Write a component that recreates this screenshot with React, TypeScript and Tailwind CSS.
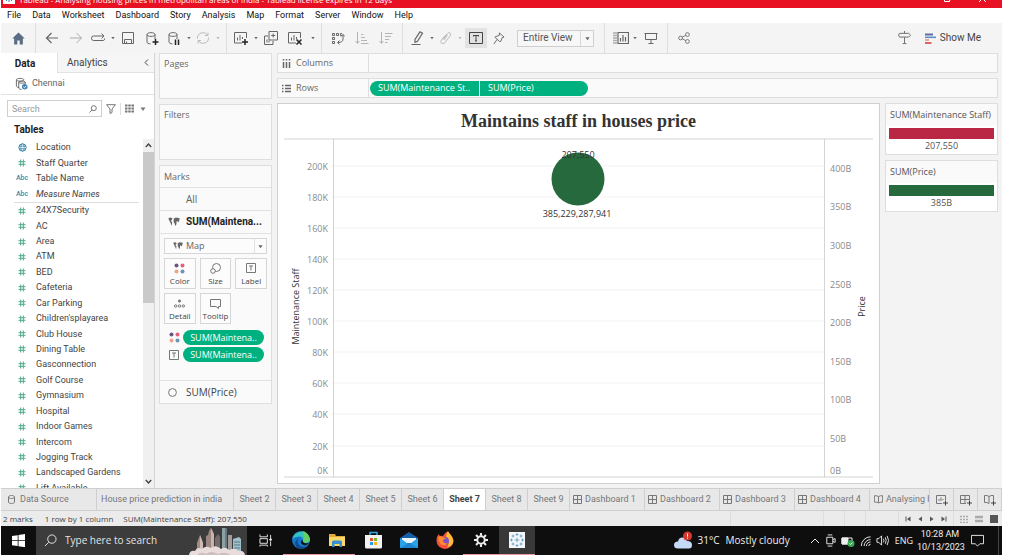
import React from "react";

type Kids = { children?: React.ReactNode };

function Icon({ size = 14, box = "0 0 14 14", className = "", children }: Kids & { size?: number; box?: string; className?: string }) {
  return (
    <svg width={size} height={size} viewBox={box} fill="none" stroke="currentColor" strokeWidth="1" className={`shrink-0 ${className}`} aria-hidden="true">
      {children}
    </svg>
  );
}

function Caret({ size = 6 }: { size?: number }) {
  return (
    <Icon size={size} box="0 0 6 6">
      <path d="M0.5 1.5h5L3 5z" fill="currentColor" stroke="none" />
    </Icon>
  );
}

function Tool({ label, className = "w-5", children }: Kids & { label: string; className?: string }) {
  return (
    <button type="button" aria-label={label} className={`flex h-5 shrink-0 items-center justify-center ${className}`}>
      {children}
    </button>
  );
}

function Sep({ className = "" }: { className?: string }) {
  return <span className={`w-px shrink-0 self-stretch bg-[#dedede] ${className}`} />;
}

const menus = ["File", "Data", "Worksheet", "Dashboard", "Story", "Analysis", "Map", "Format", "Server", "Window", "Help"];

function TitleBar() {
  return (
    <header className="flex h-2 shrink-0 items-center overflow-hidden bg-[#e81123] text-white">
      <div className="flex h-2 flex-1 items-end gap-1 pl-0.5">
        <Icon size={12} box="0 0 12 12" className="-translate-y-1">
          <rect width="12" height="12" fill="#fff" stroke="none" />
          <path d="M6 2v8M2 6h8M3 3l6 6M9 3l-6 6" stroke="#3f83b5" />
        </Icon>
        <span className="-translate-y-0.5 text-[8px] leading-[12px] whitespace-nowrap">
          Tableau - Analysing housing prices in metropolitan areas of india - Tableau license expires in 12 days
        </span>
      </div>
      <div className="flex h-2 items-start gap-7 pr-4">
        <Icon size={7} box="0 5 7 7">
          <path d="M.5 3v3.500h5V3M5.500 5h1V2" />
        </Icon>
        <Icon size={7} box="0 5 7 7">
          <path d="M0 0l7 7M7 0L0 7" />
        </Icon>
      </div>
    </header>
  );
}

function MenuBar() {
  return (
    <nav className="flex h-[15px] shrink-0 items-center gap-[11px] bg-white pl-1.5 font-[Roboto,sans-serif] text-[9px] leading-none text-[#111]">
      {menus.map((m) => (
        <button type="button" key={m}>{m}</button>
      ))}
    </nav>
  );
}

function Cylinder({ children }: Kids) {
  return (
    <Icon size={15} box="0 0 15 15">
      <path d="M2 3.500c0-2.500 8-2.500 8 0s-8 2.500-8 0v7.500c0 1 1.500 1.800 3.500 1.900M10 3.500V8" />
      {children}
    </Icon>
  );
}

function Toolbar() {
  return (
    <div role="toolbar" aria-label="Toolbar" className="flex h-[30px] shrink-0 items-center bg-[#f4f4f4] text-[#666]">
      <Tool label="Start page" className="w-[34px]">
        <Icon size={13}>
          <path d="M7 .5L.3 7h2v6.500h3.400V9.200h2.600v4.300h3.400V7h2z" fill="#5b6d83" stroke="none" />
        </Icon>
      </Tool>
      <Sep />
      <div className="flex items-center pl-1">
        <Tool label="Undo" className="w-6">
          <Icon><path d="M13 7H1.500M6.500 2l-5 5 5 5" strokeWidth="1.200" /></Icon>
        </Tool>
        <Tool label="Redo" className="w-6 text-[#aaa]">
          <Icon><path d="M1 7h11.500M7.500 2l5 5-5 5" /></Icon>
        </Tool>
        <Tool label="Replay">
          <Icon><path d="M10 9.500H2.500Q.5 9.500.5 7.200T2.500 5H13M10.500 2.500L13 5l-2.500 2.500M10 9.500h2.500q1 0 1-2" /></Icon>
        </Tool>
        <Tool label="Replay options" className="w-2.5"><Caret size={4} /></Tool>
        <Tool label="Save">
          <Icon><path d="M1.500 1.500h11v11h-11zM3.500 12.500v-4h7v4M5.500 10.500v2" /></Icon>
        </Tool>
        <Tool label="New data source" className="w-7">
          <Cylinder><path d="M10.500 8v6M7.500 11h6" stroke="#222" strokeWidth="1.500" /></Cylinder>
        </Tool>
        <Tool label="Pause auto updates" className="w-4">
          <Cylinder><path d="M8.500 8.500v5.500M11.500 8.500v5.500" stroke="#222" strokeWidth="1.500" /></Cylinder>
        </Tool>
        <Tool label="Pause options" className="w-3.5"><Caret size={4} /></Tool>
        <Tool label="Run update" className="w-3.5 text-[#bbb]">
          <Icon><path d="M1.500 7.500A5.500 5.500 0 0 1 11.500 4M12.500 6.500A5.500 5.500 0 0 1 2.500 10M12 1.500V4.500H9M2 12.500V9.500H5" /></Icon>
        </Tool>
        <Tool label="Update options" className="w-4 text-[#bbb]"><Caret size={4} /></Tool>
      </div>
      <Sep />
      <div className="flex items-center pl-1.5">
        <Tool label="New worksheet" className="w-4">
          <Icon><path d="M8 12H.5V1.500h12V7M3.500 9.500V6.500M6 9.500V4M8.500 8V6" /><path d="M11 8v6M8 11h6" stroke="#222" strokeWidth="1.500" /></Icon>
        </Tool>
        <Tool label="Worksheet options" className="w-3.5"><Caret size={4} /></Tool>
        <Tool label="Duplicate" className="w-4">
          <Icon><path d="M5 .5h8.500V9H5zM4 5H.5v8.500H9V10M9.200 2.500v4M7.200 4.500h4M3 11.500v-3M5 11.500v-2" /></Icon>
        </Tool>
        <Tool label="Clear sheet" className="w-8">
          <Icon><path d="M8 12H.5V1.500h12V7M3.500 9.500V6.500M6 9.500V4M8.500 8V6" /><path d="M8.500 8.500l5 5M13.500 8.500l-5 5" stroke="#222" strokeWidth="1.500" /></Icon>
        </Tool>
        <Tool label="Clear options" className="mr-1 w-1"><Caret size={4} /></Tool>
      </div>
      <Sep className="ml-0.5" />
      <div className="flex items-center pl-1">
        <Tool label="Swap rows and columns" className="w-6">
          <Icon><path d="M1.500 2.500h2v2h-2zM5.500 2.500h2v2h-2zM11 2.500H9.500v2H11M1.500 6.500h2v2h-2zM1.500 10.500h2v2h-2zM12 3.500v4.500q0 3.500-5 3.500M8.500 9.500l-2 2 2 2M10 5.500l2-2 2 2" /></Icon>
        </Tool>
        <Tool label="Sort ascending" className="w-6 text-[#b5b5b5]">
          <Icon><path d="M2.500 1v11M.5 10l2 2.500 2-2.500M6 3.500h2.500M6 6.500h4M6 9.500h6M6 12.500h7.500" /></Icon>
        </Tool>
        <Tool label="Sort descending" className="w-6 text-[#b5b5b5]">
          <Icon><path d="M2.500 1v11M.5 10l2 2.500 2-2.500M6 2.500h7.500M6 5.500h6M6 8.500h4M6 11.500h2.500" /></Icon>
        </Tool>
      </div>
      <Sep className="ml-1" />
      <div className="flex items-center pl-1.5">
        <Tool label="Highlight" className="w-[18px]">
          <Icon><path d="M9 .8l2.500 1.500-5 8-2.500 1 0-2.800zM.5 13.500h9" strokeWidth="1.200" /></Icon>
        </Tool>
        <Tool label="Highlight options" className="w-2.5"><Caret size={4} /></Tool>
        <Tool label="Group" className="w-[18px] text-[#bbb]">
          <Icon><path d="M4 8.500l4.500-6q1-1.500 2.500-.5t0 3L5.500 12q-1.500 1.500-3 .2t-.2-3L7 3.500M5 9l3.500-5" /></Icon>
        </Tool>
        <Tool label="Group options" className="w-2.5 text-[#bbb]"><Caret size={4} /></Tool>
        <Tool label="Show mark labels" className="w-[22px] bg-[#e3e3e3] text-[#444]">
          <Icon><path d="M.5 1.500h13v11H.5zM4.500 4.500h5M7 4.500V10M4.500 4v1.500M9.500 4v1.500M6 10h2" /></Icon>
        </Tool>
        <Tool label="Fix axes" className="w-[22px]">
          <Icon size={13}><path d="M8 1l5 4.500-2 .5-1.500 4-1 .5L3 5.500l1-.5 4-1.500zM5.500 8L2 13" /></Icon>
        </Tool>
      </div>
      <div className="relative ml-2 flex h-[17px] w-[77px] shrink-0 items-center border border-[#cfcfcf] bg-[#f7f7f7]">
        <select aria-label="Fit" className="h-full w-full appearance-none pl-[5px] font-[Roboto,sans-serif] text-[10px] leading-[14px] text-[#555]">
          <option>Entire View</option>
        </select>
        <span className="pointer-events-none absolute inset-y-0 right-0 flex w-[13px] items-center justify-center border-l border-[#d8d8d8]"><Caret size={5} /></span>
      </div>
      <Sep className="ml-2.5" />
      <div className="flex items-center pl-1.5">
        <Tool label="Show cards" className="w-5">
          <Icon size={16} box="0 0 16 14"><path d="M.5 2h3M.5 4.500h3M.5 7h3M.5 9.500h3M.5 12h3" strokeDasharray="1 1" strokeWidth="1.500" /><path d="M5 1.500h10.500v11H5zM7.500 10.500V7M10 10.500V4M12.500 10.500V6" strokeWidth="1.200" /></Icon>
        </Tool>
        <Tool label="Card options" className="w-2"><Caret size={4} /></Tool>
        <Tool label="Presentation mode" className="w-6">
          <Icon><path d="M.5 2.500h13M1.500 2.500v6h11v-6M7 8.500V12M4.500 12.500h5" /></Icon>
        </Tool>
      </div>
      <Sep className="ml-1" />
      <Tool label="Share" className="ml-1.5 w-5">
        <Icon size={12}><circle cx="3" cy="7" r="2.200" /><circle cx="11" cy="3" r="2.200" /><circle cx="11" cy="11" r="2.200" /><path d="M5 6l4-2M5 8l4 2" /></Icon>
      </Tool>
      <div className="ml-auto flex items-center gap-3 pr-[21px]">
        <Tool label="Guide" className="w-4">
          <Icon size={14} box="0 0 15 15"><path d="M7 0v2.500M2 2.500h9.500l2 2-2 2H2Q.8 6.500.8 4.500T2 2.500M7 6.600V13M5 13.500h4" /></Icon>
        </Tool>
        <button type="button" className="flex items-center gap-1 font-[Roboto,sans-serif] text-[10px] leading-none text-[#444]">
          <Icon size={11} box="0 0 11 11">
            <path d="M0 1.500h8" stroke="#5f6da0" strokeWidth="2" /><path d="M0 4.300h11" stroke="#5b8fc9" strokeWidth="1.600" />
            <path d="M0 7h4" stroke="#eb9a82" strokeWidth="1.600" /><path d="M0 10h6.500" stroke="#e0564f" strokeWidth="1.800" />
          </Icon>
          Show Me
        </button>
      </div>
    </div>
  );
}

const measures = ["24X7Security", "AC", "Area", "ATM", "BED", "Cafeteria", "Car Parking", "Children'splayarea", "Club House", "Dining Table", "Gasconnection", "Golf Course", "Gymnasium", "Hospital", "Indoor Games", "Intercom", "Jogging Track", "Landscaped Gardens", "Lift Available"];

function Hash() {
  return (
    <Icon size={8} box="0 0 8 8" className="text-[#4fa88a]">
      <path d="M2.700.5v7M5.300.5v7M.5 2.700h7M.5 5.300h7" />
    </Icon>
  );
}

function Field({ kind, name }: { kind: "geo" | "num" | "abc"; name: string }) {
  return (
    <li className="flex items-center gap-1.5">
      <span className="flex w-4 justify-center text-[#3a86ab]">
        {kind === "num" && <Hash />}
        {kind === "abc" && <span className="text-[7px] leading-none font-medium">Abc</span>}
        {kind === "geo" && <Icon size={9} box="0 0 9 9"><circle cx="4.500" cy="4.500" r="3.700" /><ellipse cx="4.500" cy="4.500" rx="1.700" ry="3.700" strokeWidth=".8" /><path d="M1 3.200h7M1 5.800h7" strokeWidth=".8" /></Icon>}
      </span>
      <span className={name === "Measure Names" ? "italic" : ""}>{name}</span>
    </li>
  );
}

function DataPane() {
  return (
    <aside className="flex w-[154px] shrink-0 flex-col overflow-hidden border-r border-[#d4d4d4] bg-white font-[Roboto,sans-serif] text-[9px] leading-[15px] text-[#444]">
      <div className="flex h-5 shrink-0">
        <button type="button" className="w-14 pr-2 text-[10px] font-bold text-[#222]">Data</button>
        <div className="flex flex-1 items-center justify-between border-b border-l border-[#e2e2e2] bg-[#f6f6f6] pr-1 pl-[9px]">
          <button type="button" className="text-[10px]">Analytics</button>
          <button type="button" aria-label="Collapse pane"><Icon size={7} box="0 0 7 7"><path d="M5 0.500L2 3.500l3 3" /></Icon></button>
        </div>
      </div>
      <div className="flex h-[22px] shrink-0 items-center gap-1 border-b border-[#e2e2e2] pl-3.5 text-[#666]">
        <Icon size={13}><path d="M1.500 3c0-2 8-2 8 0s-8 2-8 0v7q1 1.500 3 1.500M4 5.500c0-1.500 7-1.500 7 0s-7 1.500-7 0V12q1 1.500 3 1.500M11 5.500V8" /><circle cx="10.500" cy="10.500" r="3" fill="#3f7fae" stroke="none" /><path d="M9 10.500l1.200 1.200 2-2.400" stroke="#fff" /></Icon>
        Chennai
      </div>
      <div className="flex h-[27px] shrink-0 items-center pl-1.5 text-[#777]">
        <label className="flex h-[17px] w-[95px] items-center border border-[#cfcfcf] pr-1 pl-1">
          <input aria-label="Search" placeholder="Search" className="w-0 flex-1 leading-[12px] outline-none placeholder:text-[#999]" />
          <Icon size={8} box="0 0 8 8"><circle cx="4.800" cy="3.200" r="2.500" /><path d="M3 5L.5 7.500" /></Icon>
        </label>
        <button type="button" aria-label="Filter fields" className="ml-1"><Icon size={10} box="0 0 10 10"><path d="M.5.700h9L6 5v3.500L4 9.500V5z" /></Icon></button>
        <span className="ml-1 h-3 w-px bg-[#ddd]" />
        <button type="button" aria-label="View fields" className="ml-1"><Icon size={9} box="0 0 9 9"><path d="M0 1.500h9M0 4.500h9M0 7.500h9" strokeWidth="2" strokeDasharray="2.500 .75" /></Icon></button>
        <button type="button" aria-label="Field options" className="ml-1.5"><Caret /></button>
      </div>
      <h2 className="pl-[13px] text-[10px] leading-[15px] font-bold text-[#222]">Tables</h2>
      <div className="mt-0.5 flex min-h-0 flex-1">
        <div className="min-w-0 flex-1 overflow-hidden pt-px pl-[13px]">
          <ul className="grid h-[62px] auto-rows-fr whitespace-nowrap">
            <Field kind="geo" name="Location" />
            <Field kind="num" name="Staff Quarter" />
            <Field kind="abc" name="Table Name" />
            <Field kind="abc" name="Measure Names" />
          </ul>
          <hr className="mr-1 border-[#dcdcdc]" />
          <ul className="grid h-[293px] auto-rows-fr whitespace-nowrap">
            {measures.map((m) => <Field key={m} kind="num" name={m} />)}
          </ul>
        </div>
        <div className="flex w-[11px] flex-col items-center bg-[#f0f0f0] text-[#444]">
          <Icon size={7} box="0 0 7 7" className="my-[3px]"><path d="M.8 5l2.700-3 2.700 3" strokeWidth="1.400" /></Icon>
          <div className="h-[151px] w-full bg-[#c9c9c9]" />
          <Icon size={7} box="0 0 7 7" className="mt-auto mb-[3px]"><path d="M.8 2l2.700 3 2.700-3" strokeWidth="1.400" /></Icon>
        </div>
      </div>
    </aside>
  );
}

function Dots({ size = 11 }: { size?: number }) {
  return (
    <Icon size={size} box="0 0 11 11">
      <g stroke="none"><circle cx="2.500" cy="2.500" r="2" fill="#6b5580" /><circle cx="8.500" cy="2.500" r="2" fill="#e0637a" /><circle cx="2.500" cy="8.500" r="2" fill="#eba489" /><circle cx="8.500" cy="8.500" r="2" fill="#6a93b5" /></g>
    </Icon>
  );
}

function MapGlyph({ size = 12 }: { size?: number }) {
  return (
    <Icon size={size} box="0 0 12 10">
      <path d="M.3 1.200l2.200-.7 2 .8-.8 1.700-.9.900 1.400 1.400L3.700 9 2.800 6.500 1.500 4zM5.800 1.500L8 .6l3.700.6-.5 2.500-1 1.800-.7-1.200-.9-.1-.2 3L7.300 9 6.500 6.200 5.600 5z" fill="#666" stroke="none" />
    </Icon>
  );
}

function LabelGlyph({ size = 10 }: { size?: number }) {
  return <Icon size={size} box="0 0 10 10" className="text-[#777]"><path d="M.5.500h9v9h-9zM3 3h4M5 3v4.500" /></Icon>;
}

function MarkButton({ label, children }: Kids & { label: string }) {
  return (
    <button type="button" className="flex h-[31px] flex-col items-center justify-end gap-0.5 border border-[#d6d6d6] bg-[#fcfcfc] pb-0.5 text-[8px] leading-[10px] text-[#444]">
      <span className="flex h-3 items-center text-[#777]">{children}</span>
      {label}
    </button>
  );
}

const card = "border border-[#dedede] bg-[#fafafa]";

function Cards() {
  return (
    <section className="flex w-[113px] shrink-0 flex-col gap-[5px] text-[9px] leading-[12px] text-[#666]">
      <div className={`${card} h-[46px] px-1 pt-1`}>Pages</div>
      <div className={`${card} h-[56px] px-1 pt-1`}>Filters</div>
      <div className={card}>
        <h3 className="flex h-[21px] items-center px-1">Marks</h3>
        <button type="button" className="flex h-[23px] w-full items-center border-t border-[#e2e2e2] pl-[26px] text-[10px]">All</button>
        <button type="button" className="flex h-[23px] w-full items-center gap-1.5 border-t border-[#e2e2e2] pl-2 font-[Roboto,sans-serif] text-[10px] font-bold text-[#222]"><MapGlyph />SUM(Maintena...</button>
        <div className="flex h-[147px] flex-col border-t border-[#e2e2e2] px-1 pt-1">
          <div className="relative flex h-4 shrink-0 items-center border border-[#d6d6d6] bg-[#fcfcfc]">
            <span className="absolute left-2"><MapGlyph size={10} /></span>
            <select aria-label="Mark type" className="h-full w-full appearance-none pl-[21px] leading-[12px]"><option>Map</option></select>
            <span className="pointer-events-none absolute inset-y-0 right-0 flex w-3 items-center justify-center border-l border-[#e2e2e2]"><Caret size={5} /></span>
          </div>
          <div className="mt-1 grid grid-cols-3 gap-1">
            <MarkButton label="Color"><Dots /></MarkButton>
            <MarkButton label="Size"><Icon size={11} box="0 0 11 11"><circle cx="6.500" cy="4.500" r="4" /><circle cx="3" cy="8" r="2.300" fill="#fcfcfc" /></Icon></MarkButton>
            <MarkButton label="Label"><LabelGlyph /></MarkButton>
            <MarkButton label="Detail"><Icon size={11} box="0 0 11 11"><circle cx="5.500" cy="3" r="1.100" fill="currentColor" /><circle cx="1.700" cy="8" r="1.200" /><circle cx="5.500" cy="8" r="1.200" /><circle cx="9.300" cy="8" r="1.200" /></Icon></MarkButton>
            <MarkButton label="Tooltip"><Icon size={11} box="0 0 11 11"><path d="M.5 1.500h10v7h-2v2L6 8.500H.5z" /></Icon></MarkButton>
          </div>
          <div className="mt-1.5 flex flex-col gap-0.5 pl-1">
            {[<Dots key="c" />, <LabelGlyph key="l" />].map((g, i) => (
              <div key={i} className="flex items-center gap-[3px]">
                <span className="flex w-3 justify-center">{g}</span>
                <button type="button" className="h-[15px] w-[81px] rounded-full bg-[#00b180] text-white">SUM(Maintena..</button>
              </div>
            ))}
          </div>
        </div>
        <button type="button" className="flex h-[23px] w-full items-center gap-[9px] border-t border-[#e2e2e2] pl-2 text-[10px] text-[#444]"><Icon size={9} box="0 0 9 9" className="text-[#777]"><circle cx="4.500" cy="4.500" r="3.900" /></Icon>SUM(Price)</button>
      </div>
    </section>
  );
}

function Shelf({ label, icon, children }: Kids & { label: string; icon: React.ReactNode }) {
  return (
    <div className={`${card} flex h-5 shrink-0 items-center text-[9px] text-[#666]`}>
      <div className="flex w-[91px] items-center gap-[5px] self-stretch border-r border-[#dedede] pl-1">{icon}{label}</div>
      {children}
    </div>
  );
}

const leftTicks: [string, number][] = [["200K", 27], ["180K", 58], ["160K", 89], ["140K", 120], ["120K", 151], ["100K", 182], ["80K", 213], ["60K", 244], ["40K", 275], ["20K", 307], ["0K", 331]];
const rightTicks: [string, number][] = [["400B", 29], ["350B", 67], ["300B", 106], ["250B", 145], ["200B", 183], ["150B", 222], ["100B", 260], ["50B", 299], ["0B", 331]];

function Chart() {
  return (
    <svg viewBox="0 0 589 340" className="min-h-0 w-full flex-1 font-['Open_Sans',sans-serif] text-[9px]" role="img" aria-label="Maintenance staff and price">
      {leftTicks.slice(0, -1).map(([t, y]) => <path key={t} d={`M48 ${y}.5H540`} stroke="#f3f3f3" />)}
      <path d="M0 .5H590M0 338.500H590M49.500 0V339M540.500 0V339" stroke="#d4d4d4" />
      <g fill="#8a8a8a">
        {leftTicks.map(([t, y]) => <text key={t} x="44" y={y + 4} textAnchor="end">{t}</text>)}
        {rightTicks.map(([t, y]) => <text key={t} x="546" y={y + 4}>{t}</text>)}
      </g>
      <g fill="#333" textAnchor="middle">
        <text transform="translate(15 168) rotate(-90)">Maintenance Staff</text>
        <text transform="translate(581 168) rotate(-90)">Price</text>
        <circle cx="294" cy="40.500" r="26.500" fill="#25693c" />
        <text x="294" y="19">207,550</text>
        <text x="293" y="78">385,229,287,941</text>
      </g>
    </svg>
  );
}

function Legend({ title, bar, value }: { title: string; bar: string; value: string }) {
  return (
    <div className="flex h-[52px] flex-col border border-[#dedede] bg-white text-[9px] text-[#555]">
      <div className="h-[22px] bg-[#fafafa] pt-1 pl-1 leading-[14px] whitespace-nowrap">{title}</div>
      <div className={`mx-[3px] mt-0.5 h-[11px] ${bar}`} />
      <div className="text-center leading-[14px]">{value}</div>
    </div>
  );
}

function Workspace() {
  return (
    <main className="flex min-w-0 flex-1 flex-col gap-[5px] pr-1">
      <Shelf label="Columns" icon={<Icon size={9} box="0 0 9 9"><path d="M1.500 0v1.500M1.500 3v6M4.500 0v1.500M4.500 3v6M7.500 0v1.500M7.500 3v6" strokeWidth="1.500" /></Icon>} />
      <Shelf label="Rows" icon={<Icon size={9} box="0 0 9 9"><path d="M0 1.500h1.500M3 1.500h6M0 4.500h1.500M3 4.500h6M0 7.500h1.500M3 7.500h6" strokeWidth="1.300" /></Icon>}>
        <div className="ml-px flex h-[15px] gap-px overflow-hidden rounded-full text-white">
          <button type="button" className="w-[109px] bg-[#00b180] pl-2 text-left">SUM(Maintenance St..</button>
          <button type="button" className="w-[108px] bg-[#00b180] pl-2 text-left">SUM(Price)</button>
        </div>
      </Shelf>
      <div className="flex min-h-0 flex-1 items-start gap-[5px]">
        <section className="flex min-w-0 flex-1 flex-col self-stretch border border-[#d0d0d0] bg-white px-1.5 pb-1">
          <h1 className="h-[34px] shrink-0 text-center font-['Liberation_Serif',serif] text-[18px] leading-[34px] font-bold text-[#333]">Maintains staff in houses price</h1>
          <Chart />
        </section>
        <div className="flex w-[113px] shrink-0 flex-col gap-[5px]">
          <Legend title="SUM(Maintenance Staff)" bar="bg-[#b92745]" value="207,550" />
          <Legend title="SUM(Price)" bar="bg-[#25693c]" value="385B" />
        </div>
      </div>
    </main>
  );
}

function DashGlyph() {
  return <Icon size={9} box="0 0 9 9"><path d="M.5.500h8v8h-8zM.5 4.500h8M4.500.500v8" /></Icon>;
}

function BookGlyph() {
  return <Icon size={9} box="0 0 12 12"><path d="M6 2Q3.500.500.500 1v8.500q3-.5 5.500 1 2.500-1.500 5.500-1V1Q8.500.500 6 2v8" strokeWidth="1.300" /></Icon>;
}

const sheets = ["Sheet 2", "Sheet 3", "Sheet 4", "Sheet 5", "Sheet 6", "Sheet 7", "Sheet 8", "Sheet 9"];

function SheetTabs() {
  const tab = "flex shrink-0 items-center border-r border-[#cfcfcf]";
  return (
    <nav aria-label="Sheets" className="flex h-[23px] shrink-0 border-y border-[#cfcfcf] bg-[#e8e8e8] font-[Roboto,sans-serif] text-[9px] text-[#777]">
      <button type="button" className={`${tab} w-24 gap-1 pl-1.5`}>
        <Icon size={9} box="0 0 9 9"><path d="M1.500 2c0-2 6-2 6 0s-6 2-6 0v5c0 2 6 2 6 0V2" /></Icon>Data Source
      </button>
      <button type="button" className={`${tab} w-[137px] pl-1 whitespace-nowrap`}>House price prediction in india</button>
      {sheets.map((s) => (
        <button type="button" key={s} className={s === "Sheet 7" ? `${tab} w-[42px] justify-center bg-white font-bold text-[#444]` : `${tab} w-[42px] justify-center`}>{s}</button>
      ))}
      {[1, 2, 3, 4].map((n) => (
        <button type="button" key={n} className={`${tab} w-[75px] gap-[3px] pl-[3px] whitespace-nowrap`}><DashGlyph />Dashboard {n}</button>
      ))}
      <button type="button" className="flex min-w-0 flex-1 items-center gap-[3px] overflow-hidden border-r border-[#cfcfcf] pl-1 whitespace-nowrap"><BookGlyph />Analysing housing</button>
      <button type="button" aria-label="New worksheet" className={`${tab} w-6 justify-center`}><Icon size={12} box="0 0 12 12"><path d="M6 9.500H.5v-8h9V6M3 7V5M5 7V3.500M7 6V5" /><path d="M9.500 6.500v5M7 9h5" stroke="#444" /></Icon></button>
      <button type="button" aria-label="New dashboard" className={`${tab} w-6 justify-center`}><Icon size={12} box="0 0 12 12"><path d="M6 9.500H.5v-8h9V6M.5 5.500h9M5 1.500v8" /><path d="M9.500 6.500v5M7 9h5" stroke="#444" /></Icon></button>
      <button type="button" aria-label="New story" className={`${tab} w-6 justify-center`}><Icon size={12} box="0 0 12 12"><path d="M5 2.500Q3 1 .5 1.500v7q2.500-.5 4.500 1V2.500Q7 1 9.500 1.500V6" /><path d="M9.500 6.500v5M7 9h5" stroke="#444" /></Icon></button>
    </nav>
  );
}

function StatusBar() {
  return (
    <footer className="flex h-[15px] shrink-0 items-center bg-[#ebebeb] pr-1 pl-0.5 text-[8px] leading-none text-[#444]">
      <span>2 marks</span>
      <span className="ml-3">1 row by 1 column</span>
      <span className="ml-2.5">SUM(Maintenance Staff): 207,550</span>
      <Sep className="ml-auto" />
      <Sep className="ml-[92px]" />
      <Sep className="ml-5" />
      <Sep className="ml-5" />
      <Sep className="ml-8" />
      <div className="ml-1.5 flex gap-1.5 text-[#555]">
        <Icon size={6} box="0 0 6 6"><path d="M1 .5v5" /><path d="M5.500.500v5L2 3z" fill="currentColor" stroke="none" /></Icon>
        <Icon size={6} box="0 0 6 6"><path d="M5 .5v5L1.500 3z" fill="currentColor" stroke="none" /></Icon>
        <Icon size={6} box="0 0 6 6"><path d="M1 .5v5L4.500 3z" fill="currentColor" stroke="none" /></Icon>
        <Icon size={6} box="0 0 6 6"><path d="M5 .5v5" /><path d="M.5.500v5L4 3z" fill="currentColor" stroke="none" /></Icon>
      </div>
      <Sep className="ml-1.5" />
      <div className="ml-1.5 flex gap-[7px]">
        <Icon size={8} box="0 0 8 8" className="text-[#aaa]"><path d="M0 1.500h8M0 4.500h8M0 7.500h8" strokeDasharray="2 1" strokeWidth="1.500" /></Icon>
        <Icon size={8} box="0 0 8 8" className="text-[#aaa]"><path d="M0 2h8M0 6h8" strokeWidth="2.500" /></Icon>
        <Icon size={8} box="0 0 8 8"><path d="M0 0h8v8H0z" fill="#555" stroke="none" /></Icon>
      </div>
    </footer>
  );
}

function TaskApp({ label, className = "", children }: Kids & { label: string; className?: string }) {
  return <button type="button" aria-label={label} className={`flex w-9 shrink-0 items-center justify-center border-b ${className}`}>{children}</button>;
}

function Taskbar() {
  return (
    <div className="flex h-[29px] shrink-0 bg-[#0e0e0e] text-[10px] leading-[13px] text-[#eee]">
      <button type="button" aria-label="Start" className="flex w-[35px] items-center justify-center">
        <Icon size={13} box="0 0 13 13"><path d="M0 2l5.700-.8v5H0zM6.500 1L13 0v6.200H6.500zM0 7h5.700v5L0 11.200zM6.500 7H13v6.200l-6.500-1z" fill="#fff" stroke="none" /></Icon>
      </button>
      <label className="flex w-[211px] items-center gap-2 bg-[#3c3c3c] pl-2">
        <Icon size={13}><circle cx="8.500" cy="5.500" r="4.500" /><path d="M5 9l-4 4" /></Icon>
        <input aria-label="Type here to search" placeholder="Type here to search" className="w-0 flex-1 outline-none placeholder:text-[#e4e4e4]" />
        <svg width="58" height="27" viewBox="0 0 58 27" className="self-end" aria-hidden="true">
          <path d="M8 22V15l3-8 3 8v7z" fill="#a48b83" /><path d="M11 7l3 8v7h-3z" fill="#cdbdb5" />
          <path d="M17 22V8l2-1 1-4 2-3 2 4v18z" fill="#9b8580" /><path d="M22 0l3 6v16h-3z" fill="#c8b4aa" />
          <path d="M26 22V10l3-4 2 3v13z" fill="#756a6a" /><path d="M33 22V0h5v22z" fill="#8da0a3" /><path d="M36 0h2v22h-2z" fill="#667b80" />
          <path d="M39 22V7h4v15z" fill="#a49a99" /><path d="M44 24V11l6-2 2 2v13z" fill="#9fc0ca" /><path d="M45 14h6M45 17h6M45 20h6" stroke="#527989" />
          <path d="M0 27q1-5 6-4 2-5 7-2 4-4 9-1 5-4 10 1 4-3 8 1 7-3 9 1 6-1 7 4z" fill="#e8ddda" /><path d="M8 27q4-4 9-1 5-4 12 0 7-3 13 1z" fill="#cdbfbd" />
        </svg>
      </label>
      <TaskApp label="Task view" className="border-transparent">
        <Icon size={13}><path d="M1 .5V3h8V.5M1 5h8v5H1zM1 13.500V12h8v1.500M12.500 1v4M12.500 8v5" /><circle cx="12.500" cy="6" r="1" fill="currentColor" /></Icon>
      </TaskApp>
      <TaskApp label="Edge" className="border-[#e79a9f]">
        <svg width="18" height="18" viewBox="0 0 18 18" aria-hidden="true">
          <circle cx="9" cy="9" r="9" fill="#1676c9" /><path d="M.3 8A9 9 0 0 1 17.900 7.800q.3 4-4 4-3.800 0-2.700-2.500Q11 5.500 7 5.500 2.500 5.500.3 8z" fill="#35c1c0" />
          <path d="M10 .1a9 9 0 0 1 7.900 8q0 3.700-4 3.700-3.800 0-2.700-2.500Q13 4 10 .1z" fill="#62cf68" /><path d="M7 7.500q-3 3 0 6.500 3.500 3.500 9 .5-3 4-8 3.500Q2 16 3.500 10.500 5 8 7 7.500z" fill="#114a8b" /><path d="M10.800 8.800q-1 3 3.200 3.600l3-.6q-2 3.200-5.600 2.200-3.200-1.400-2.200-4z" fill="#111" />
        </svg>
      </TaskApp>
      <TaskApp label="File Explorer" className="border-[#e79a9f]">
        <svg width="16" height="14" viewBox="0 0 16 14" aria-hidden="true"><path d="M0 1h6l1 2h9v10H0z" fill="#e3a83a" /><path d="M0 4h16v9H0z" fill="#fbd968" /><path d="M3 14V9q0-1.500 1.500-1.500h7Q13 7.500 13 9v5h-2.500v-3h-5v3z" fill="#3a8fcf" /></svg>
      </TaskApp>
      <TaskApp label="Store" className="border-transparent">
        <svg width="17" height="18" viewBox="0 0 17 18" aria-hidden="true"><path d="M5 5V1.500h7V5" fill="none" stroke="#36a6de" strokeWidth="1.500" /><path d="M0 4h17v12q0 1.500-1.500 1.500h-14Q0 17.500 0 16z" fill="#f2f2f2" /><path d="M5 7h3v3H5z" fill="#e8502f" /><path d="M9 7h3v3H9z" fill="#7eb52a" /><path d="M5 11h3v3H5z" fill="#2b9be0" /><path d="M9 11h3v3H9z" fill="#f5b51d" /></svg>
      </TaskApp>
      <TaskApp label="Mail" className="border-transparent">
        <svg width="18" height="16" viewBox="0 0 18 16" aria-hidden="true"><path d="M0 6l9-6 9 6v10H0z" fill="#1460a8" /><path d="M2 6h14v5H2z" fill="#eaf6fd" /><path d="M0 6l9 6.500L18 6v10H0z" fill="#2ba2e6" /><path d="M0 16l9-5 9 5z" fill="#1c86d4" /></svg>
      </TaskApp>
      <TaskApp label="Firefox" className="border-transparent">
        <svg width="18" height="18" viewBox="0 0 18 18" aria-hidden="true"><path d="M12 .3q1 2 3 4 2.500 2.700 2.500 5.500a8.500 8.200 0 0 1-17 0Q.5 5 3 3q0 1.500 1 2 2-.6 3 0Q8 2 12 .3z" fill="#f5503a" /><path d="M12 .3q1 2 3 4 3.700 5 1.500 8.700-2 3-5.500 3.500 3-4 0-9Q9 4 12 .3z" fill="#fdbd35" /><circle cx="9" cy="10" r="4" fill="#8050c8" /><path d="M2 6q3-1.200 5 .5 2-.3 3 1Q8 8 6.500 9.500 8 13 12 12q-3 3.500-7 1.500Q2.500 11 2 6z" fill="#fb8b2d" /></svg>
      </TaskApp>
      <TaskApp label="Settings" className="border-[#e79a9f]">
        <Icon size={14} box="0 0 15 15"><circle cx="7.500" cy="7.500" r="4" strokeWidth="2.200" /><path d="M7.500 0v3M7.500 12v3M0 7.500h3M12 7.500h3M2.200 2.200l2 2M10.800 10.800l2 2M12.800 2.200l-2 2M4.200 10.800l-2 2" strokeWidth="2.200" /></Icon>
      </TaskApp>
      <TaskApp label="Tableau" className="border-[#e79a9f] bg-[#383838]">
        <svg width="16" height="16" viewBox="0 0 16 16" fill="none" stroke="#5b95c0" aria-hidden="true"><path d="M0 0h16v16H0z" fill="#f4f8fb" stroke="none" /><path d="M8 5.500v5M5.500 8h5M8 1v3M6.500 2.500h3M8 12v3M6.500 13.500h3M1 8h3M2.500 6.500v3M12 8h3M13.500 6.500v3M4 2.500v3M2.500 4h3M12 2.500v3M10.500 4h3M4 10.500v3M2.500 12h3M12 10.500v3M10.500 12h3" strokeWidth=".8" /></svg>
      </TaskApp>
      <div className="ml-auto flex items-center">
        <svg width="20" height="20" viewBox="0 0 20 20" aria-hidden="true"><path d="M4 17.500q-4 0-4-3.500t4-3.500Q5 6 9 6.500q3 0 4 3.500 5 0 5 4t-4 3.500z" fill="#c5daf7" /><circle cx="13.500" cy="5" r="4.500" fill="#d5382c" /><path d="M13.500 2.500v3.200M13.500 6.700v1" stroke="#fff" /></svg>
        <button type="button" className="ml-1 flex gap-1.5 whitespace-nowrap"><span>31°C</span><span>Mostly cloudy</span></button>
        <div className="ml-5 flex items-center gap-1">
          <Icon size={10} box="0 0 10 10"><path d="M1 7l4-4 4 4" /></Icon>
          <Icon size={13}><path d="M3 3.500h6.500v7H3zM9.500 6l2.500-1v4l-2.500-1M4 1h5M4 13h5" /></Icon>
          <Icon><path d="M1 4h10v6H1z" /><path d="M1 4h6v6H1z" fill="#eee" /><circle cx="10" cy="9.500" r="3.500" fill="#36a852" stroke="none" /><path d="M8.500 9.500l1 1 2-2" stroke="#fff" /></Icon>
          <Icon size={13}><path d="M2.500 13A10 10 0 0 1 12.500 3M5.500 13a7 7 0 0 1 7-7M8 13a4.500 4.500 0 0 1 4.500-4.500M10.500 13a2 2 0 0 1 2-2" /></Icon>
          <Icon size={13}><path d="M1 5h2l3-3v10L3 9H1zM8 5q1.200 2 0 4M10 3.500q2 3.500 0 7M12 2q3 5 0 10" /></Icon>
        </div>
        <span className="ml-1.5 text-[9px]">ENG</span>
        <span className="ml-1 w-[46px] text-center font-[Roboto,sans-serif] text-[9px] whitespace-nowrap">10:28 AM<br />10/13/2023</span>
        <button type="button" aria-label="Notifications" className="ml-2"><Icon size={13}><path d="M.5 1.500h13v9h-4L7 13l-2.500-2.500h-4z" /></Icon></button>
        <span className="mr-[3px] ml-3.5 h-[29px] w-px bg-[#444]" />
      </div>
    </div>
  );
}

export default function App() {
  return (
    <div className="flex h-screen flex-col overflow-hidden bg-white pr-[31px] pb-1 pl-px font-['Open_Sans',sans-serif]">
      <TitleBar />
      <MenuBar />
      <Toolbar />
      <div className="flex min-h-0 flex-1 gap-1 bg-[#f3f3f3]">
        <DataPane />
        <div className="flex min-w-0 flex-1 gap-[5px] pb-1">
          <Cards />
          <Workspace />
        </div>
      </div>
      <SheetTabs />
      <StatusBar />
      <Taskbar />
    </div>
  );
}
